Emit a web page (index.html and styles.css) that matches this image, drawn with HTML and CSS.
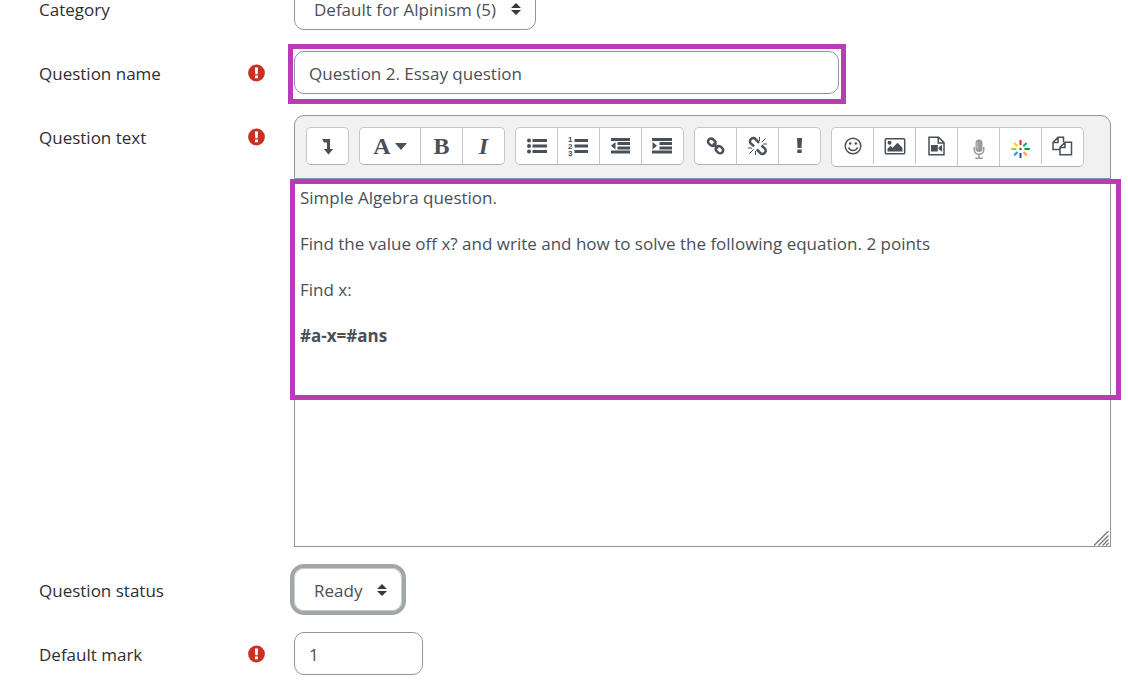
FILE: index.html
```html
<!DOCTYPE html>
<html lang="en">
<head>
<meta charset="utf-8">
<title>Essay question</title>
<meta name="viewport" content="width=device-width, initial-scale=1">
<link rel="stylesheet" href="styles.css">
</head>
<body>
<svg class="defs" aria-hidden="true">
  <symbol id="req" viewBox="0 0 18 18"><circle cx="8.500" cy="9" r="8.400" fill="#ca3120"/><path d="M6.900 3.600h3.200l-.4 6.600H7.300zM7 11.600h3v2.700H7z" fill="#fff"/></symbol>
  <symbol id="sort" viewBox="0 0 10 12"><path d="M5 0l5 5H0zM5 12l5-5H0z" fill="#343a40"/></symbol>
</svg>
<form class="form">
  <div class="row">
    <label class="label" for="category">Category</label>
    <div class="field">
      <span class="select"><select id="category"><option>Default for Alpinism (5)</option></select><svg class="sort"><use href="#sort"/></svg></span>
    </div>
  </div>

  <div class="row">
    <label class="label" for="name">Question name</label>
    <svg class="req" role="img" aria-label="Required"><use href="#req"/></svg>
    <div class="field">
      <div class="name marked"><input class="input" id="name" type="text" value="Question 2. Essay question"></div>
    </div>
  </div>

  <div class="row">
    <span class="label" id="text-label">Question text</span>
    <svg class="req" role="img" aria-label="Required"><use href="#req"/></svg>
    <div class="field editor">
      <div class="toolbar" role="toolbar" aria-label="Editor">
        <div class="group">
          <button type="button" aria-label="Show more buttons"><svg class="icon" viewBox="0 0 24 24"><path d="M6 5h8v10h3.200L12.500 20.500 7.800 15H11V8.500H8z" fill="currentColor"/></svg></button>
        </div>
        <div class="group">
          <button type="button" class="wide" aria-label="Paragraph styles"><span class="glyph">A</span><svg class="caret" viewBox="0 0 12 7"><path d="M0 0h12L6 7z" fill="currentColor"/></svg></button>
          <button type="button" aria-label="Bold"><span class="glyph">B</span></button>
          <button type="button" aria-label="Italic"><span class="glyph italic">I</span></button>
        </div>
        <div class="group">
          <button type="button" aria-label="Unordered list"><svg class="icon" viewBox="0 0 24 24" fill="currentColor"><circle cx="4" cy="6.500" r="2"/><circle cx="4" cy="12" r="2"/><circle cx="4" cy="17.500" r="2"/><path d="M7.500 5H22v3H7.500zM7.500 10.500H22v3H7.500zM7.500 16H22v3H7.500z"/></svg></button>
          <button type="button" aria-label="Ordered list"><svg class="icon" viewBox="0 0 24 24" fill="currentColor"><path d="M7.500 5H21v3H7.500zM7.500 10.500H21v3H7.500zM7.500 16H21v3H7.500z"/><g class="digits"><text x="1" y="8">1</text><text x="1" y="15">2</text><text x="1" y="22">3</text></g></svg></button>
          <button type="button" aria-label="Outdent"><svg class="icon" viewBox="0 0 24 24" fill="currentColor"><path d="M2 4h19v3H2zM8.500 8H21v3H8.500zM8.500 12.500H21v3H8.500zM2 16.500h19v3H2zM6.500 8v7.500L2 11.800z"/></svg></button>
          <button type="button" aria-label="Indent"><svg class="icon" viewBox="0 0 24 24" fill="currentColor"><path d="M1 4h20v3H1zM8.500 8H21v3H8.500zM8.500 12.500H21v3H8.500zM1 16.500h20v3H1zM1.500 8v7.500L6 11.800z"/></svg></button>
        </div>
        <div class="group">
          <button type="button" aria-label="Link"><svg class="icon" viewBox="0 0 24 24" fill="none" stroke="currentColor" stroke-width="2.500"><rect x="-4" y="-3" width="8" height="6" rx="2.900" transform="translate(7.800 8.200) rotate(42)"/><rect x="-4" y="-3" width="8" height="6" rx="2.900" transform="translate(15.400 15.600) rotate(42)"/><path d="M9 9.400l5 4.900"/></svg></button>
          <button type="button" aria-label="Unlink"><svg class="icon" viewBox="0 0 24 24" fill="none" stroke="currentColor" stroke-width="2.500"><path d="M8 12.200L4.800 9.400a2.800 2.800 0 010-4l.5-.5a2.800 2.800 0 014 0l3.700 4M15.500 11.500l3.400 3.200a2.800 2.800 0 010 4l-.5.500a2.800 2.800 0 01-4 0l-3.600-3.900"/><path d="M13.500 7V3M15.500 8.500l4-4M17 10h4M9.500 17v4M7.500 15.500l-4 4M6 14H2" stroke-width="1"/></svg></button>
          <button type="button" aria-label="Prevent automatic links"><svg class="icon" viewBox="0 0 24 24"><path d="M9 4h5l-.5 10h-4zM9.300 15.500h4.400V19H9.300z" fill="currentColor"/></svg></button>
        </div>
        <div class="group">
          <button type="button" aria-label="Emoji picker"><svg class="icon" viewBox="0 0 24 24" fill="none" stroke="currentColor" stroke-width="1.500"><circle cx="12" cy="12" r="7.800"/><path d="M7.500 13.500c1.500 4 7.500 4 9 0"/><g fill="currentColor" stroke="none"><circle cx="9.200" cy="9.500" r="1.300"/><circle cx="14.800" cy="9.500" r="1.300"/></g></svg></button>
          <button type="button" aria-label="Insert image"><svg class="icon" viewBox="0 0 24 24"><rect x="2.300" y="4.700" width="19.400" height="15" rx="1" fill="none" stroke="currentColor" stroke-width="1.500"/><circle cx="6.500" cy="8.800" r="2" fill="currentColor"/><path d="M4.500 17.500v-2.700l3-3 2 2 5-5 5 5v3.700z" fill="currentColor"/></svg></button>
          <button type="button" aria-label="Insert media"><svg class="icon" viewBox="0 0 24 24"><path d="M4 3.300h9.500l5.500 5.300v12.100H4zM13.300 3.500V9h5.500" fill="none" stroke="currentColor" stroke-width="1.500"/><path d="M6 11h6.800v6.500H6zM17 10.800v6.900L13.500 15v-1.500z" fill="currentColor"/></svg></button>
          <button type="button" class="low" aria-label="Record audio"><svg class="icon" viewBox="0 0 24 24"><rect x="8.500" y="2.500" width="7" height="12.500" rx="3.500" fill="#999"/><path d="M10.500 5v7" stroke="#bbb" stroke-width="1.500"/><path d="M7.200 10v2.500a4.800 4.800 0 009.600 0V10M12 17.300V21M8.300 21.300h7.400" fill="none" stroke="#999" stroke-width="1.500"/></svg></button>
          <button type="button" class="low" aria-label="Cliparts"><svg class="icon" viewBox="0 0 24 24" fill="none" stroke-width="2"><path d="M11.500 3v5" stroke="#e3262e"/><path d="M17.600 6l-3.300 3.300" stroke="#00a878"/><path d="M15.500 12h5.300" stroke="#009845"/><path d="M14.500 15l3.300 3.300" stroke="#f5a21b"/><path d="M11.500 16v5" stroke="#1d4f9f"/><path d="M8.500 15l-3.300 3.300" stroke="#00a3d4"/><path d="M2.200 12h5.300" stroke="#a4cf2d"/><path d="M5.200 6l3.300 3.300" stroke="#f9cb00"/><circle cx="11.500" cy="12" r="1.300" fill="#666"/></svg></button>
          <button type="button" aria-label="Manage files"><svg class="icon" viewBox="0 0 24 24" fill="none" stroke="currentColor" stroke-width="1.500"><path d="M9 15.500H2V8.500l5-5.200h5.500v5M7 3.500v5H2M12.500 7.500V3.300"/><path d="M9 20.700v-7.500l5-5h6.500v12.500zM14 8.200v5.300H9"/></svg></button>
        </div>
      </div>
      <div class="body" role="textbox" aria-multiline="true" aria-labelledby="text-label" contenteditable="true" spellcheck="false"><div class="question marked"><p>Simple Algebra question.</p><p>Find the value off x? and write and how to solve the following equation. 2 points</p><p>Find x:</p><p><strong>#a-x=#ans</strong></p></div></div>
      <svg class="grip" viewBox="0 0 15 15" aria-hidden="true"><path d="M0 14.500L14.500 0M4.500 14.500l10-10M8.500 14.500l6-6M12 14.500l2.500-2.500" stroke="#777" stroke-width="1.300"/></svg>
    </div>
  </div>

  <div class="row">
    <label class="label" for="status">Question status</label>
    <div class="field">
      <span class="select focused"><select id="status"><option>Ready</option></select><svg class="sort"><use href="#sort"/></svg></span>
    </div>
  </div>

  <div class="row">
    <label class="label" for="mark">Default mark</label>
    <svg class="req" role="img" aria-label="Required"><use href="#req"/></svg>
    <div class="field"><input class="input short" id="mark" type="text" value="1"></div>
  </div>
</form>
</body>
</html>
```
FILE: styles.css
```css
* { box-sizing: border-box; }

body {
  margin: 0;
  background: #fff;
  color: #495057;
  font: 17px/28px "Open Sans", "Noto Sans", sans-serif;
  overflow: hidden;
}

.defs { display: none; }

/* The form is scrolled so that its first row is cut by the window edge. */
.form {
  display: flex;
  flex-direction: column;
  gap: 21px;
  margin-top: -13px;
  padding: 0 17px 0 39px;
}

.row {
  display: grid;
  grid-template-columns: 209px 46px minmax(0, 1fr);
}

.label {
  grid-column: 1;
  padding-top: 9px;
  color: #2b2f33;
}

.req {
  grid-column: 2;
  width: 18px;
  height: 18px;
  margin-top: 13px;
}

.field { grid-column: 3; }

.input,
select {
  height: 43px;
  border: 1px solid #8f959e;
  border-radius: 10px;
  background: #fff;
  color: inherit;
  font: inherit;
}

.input {
  display: block;
  width: 100%;
  padding: 1px 14px 0;
}

.name {
  width: 67%;
  max-width: 545px;
}

.short { width: 129px; }

.select {
  display: inline-block;
  position: relative;
  vertical-align: top;
  border-radius: 10px;
}

select {
  appearance: none;
  display: block;
  padding: 2px 38px 0 19px;
}

.sort {
  position: absolute;
  top: 16px;
  right: 15px;
  width: 10px;
  height: 12px;
  pointer-events: none;
}

.focused { box-shadow: 0 0 0 4px #a1a6a6; }
.focused select { border-color: #c9cccc; }

/* Purple callout frames */
.marked { position: relative; }

.marked::after {
  content: "";
  position: absolute;
  border: 5px solid #b83bb8;
  pointer-events: none;
}

.name::after { inset: -7px -7px -10px -6px; }
.question::after { inset: 0 -11px 0 -5px; }

.editor {
  position: relative;
  display: flex;
  flex-direction: column;
}

.toolbar {
  display: flex;
  align-items: flex-start;
  gap: 10px;
  padding: 11px;
  border: 1px solid #8f959e;
  border-radius: 10px 10px 0 0;
  background: #f1f1f1;
}

.group {
  display: flex;
  align-items: flex-start;
  border: 1px solid #c4c6c9;
  border-bottom-color: #aeb0b3;
  border-radius: 5px;
  background: #fff;
}

.group button {
  display: flex;
  align-items: center;
  justify-content: center;
  width: 41px;
  height: 36px;
  padding: 0;
  border: 0;
  background: none;
  color: #495057;
}

.group button + button {
  width: 42px;
  border-left: 1px solid #c4c6c9;
}

.group .wide {
  width: 60px;
  gap: 4px;
}

.group .low {
  height: 38px;
  padding-top: 4px;
}

.icon {
  width: 24px;
  height: 24px;
}

.caret {
  width: 12px;
  height: 7px;
}

.glyph {
  font: bold 24px/28px "Liberation Serif", serif;
}

.italic { font-style: italic; }

.digits { font: bold 8px "Liberation Sans", sans-serif; }

.body {
  min-height: 368px;
  border: 1px solid #8f959e;
  border-top: 0;
  outline: 0;
}

.question {
  min-height: 221px;
  padding: 5px;
}

.question p { margin: 0 0 18px; }

.grip {
  position: absolute;
  right: 2px;
  bottom: 1px;
  width: 15px;
  height: 15px;
}
```
